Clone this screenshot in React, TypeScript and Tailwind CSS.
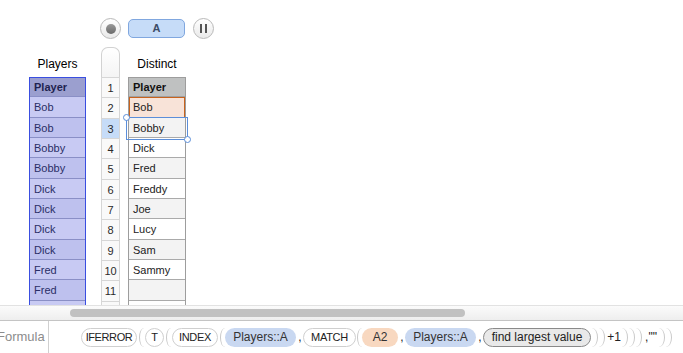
import React from "react";

const players = ["Bob", "Bob", "Bobby", "Bobby", "Dick", "Dick", "Dick", "Dick", "Fred", "Fred", "Fred", "Fred"];
const distinct = ["Bob", "Bobby", "Dick", "Fred", "Freddy", "Joe", "Lucy", "Sam", "Sammy", "", "", ""];

const OpenArc = ({ ml }: { ml: string }) => (
  <span className={`${ml} h-[19px] w-[5px] shrink-0 border-l border-[#c9c9c9] rounded-tl-[100%_50%] rounded-bl-[100%_50%]`} />
);

const CloseArc = ({ ml }: { ml: string }) => (
  <span className={`${ml} h-[19px] w-[6px] shrink-0 border-r border-[#c9c9c9] rounded-tr-[100%_50%] rounded-br-[100%_50%]`} />
);

const App: React.FC = () => {
  return (
    <div className="w-[683px] h-[353px] bg-white overflow-hidden flex flex-col font-['Liberation_Sans',Arial,sans-serif] text-[#222]">
      {/* Controls */}
      <div className="h-[47px] shrink-0 flex items-start pt-[18px] pl-[100px]">
        <div className="w-[21px] h-[21px] rounded-full border border-[#b9b9b9] bg-gradient-to-b from-white to-[#e9e9e9] flex items-center justify-center">
          <div className="w-[10px] h-[10px] rounded-full bg-gradient-to-b from-[#9a9a9a] to-[#6a6a6a]" />
        </div>
        <div className="ml-[7px] mt-[1px] w-[57px] h-[19px] rounded-[5px] border border-[#80a7df] bg-[#c6dcf8] flex items-center justify-center text-[11px] font-bold text-[#3b4b66]">
          A
        </div>
        <div className="ml-[8px] w-[21px] h-[21px] rounded-full border border-[#b9b9b9] bg-gradient-to-b from-white to-[#e9e9e9] flex items-center justify-center gap-[3px]">
          <div className="w-[2px] h-[9px] bg-[#555]" />
          <div className="w-[2px] h-[9px] bg-[#555]" />
        </div>
      </div>

      {/* Sheet */}
      <div className="h-[258px] shrink-0 overflow-hidden flex items-start">
        {/* Players table */}
        <div className="ml-[29px] w-[57px] flex flex-col">
          <div className="h-[30px] flex items-end justify-center pb-[6px] text-[12px] leading-[14px] text-black">Players</div>
          <div className="border-l border-r border-t border-[#3a4ee0]">
            <div className="h-[19.33px] border-b border-[#8a8fc6] bg-[#9b9fcf] pl-[4px] pt-[1px] flex items-center text-[11px] font-bold text-[#1f2350]">
              Player
            </div>
            {players.map((p, i) => (
              <div
                key={i}
                className={`h-[20.33px] border-b border-[#8a8fc6] pl-[4px] pt-[1px] flex items-center text-[11px] text-[#2a2e66] ${
                  i % 2 === 0 ? "bg-[#c8caf3]" : "bg-[#bec1ee]"
                }`}
              >
                {p}
              </div>
            ))}
          </div>
        </div>

        {/* Row numbers */}
        <div className="ml-[15px] w-[19px] flex flex-col">
          <div className="h-[30px] rounded-t-[7px] border border-b-0 border-[#d2d2d2] bg-gradient-to-b from-white to-[#f4f4f4]" />
          {Array.from({ length: 12 }).map((_, i) => (
            <div
              key={i}
              className={`h-[20.33px] border-l border-r border-t border-[#d6d6d6] pt-[1px] flex items-center justify-center text-[11px] text-[#2a2a2a] ${
                i === 2 ? "bg-[#c6dcf8]" : "bg-[#f9f9f9]"
              }`}
            >
              {i + 1}
            </div>
          ))}
        </div>

        {/* Distinct table */}
        <div className="relative ml-[8px] w-[58px] flex flex-col">
          <div className="h-[30px] flex items-end justify-center pb-[6px] text-[12px] leading-[14px] text-black">Distinct</div>
          <div className="border-l border-r border-t border-[#9d9d9d]">
            <div className="h-[19.33px] border-b border-[#a0a0a0] bg-[#bfc1c1] pl-[4px] pt-[1px] flex items-center text-[11px] font-bold text-[#111]">
              Player
            </div>
            {distinct.map((d, i) => (
              <div
                key={i}
                className={`h-[20.33px] border-b pl-[4px] pt-[1px] flex items-center text-[11px] text-[#222] ${
                  i === 0
                    ? "bg-[#f8e3d8] border-[#c8631d] outline outline-1 outline-[#c8631d] -outline-offset-1"
                    : i % 2 === 1
                    ? "bg-[#f3f3f3] border-[#aaaaaa]"
                    : "bg-white border-[#aaaaaa]"
                }`}
              >
                {d}
              </div>
            ))}
          </div>

          {/* Selection overlay */}
          <div className="absolute left-[-2px] top-[70px] w-[62px] h-[23px] border border-[#5b8ed9]">
            <div className="absolute -left-[4px] -top-[4px] w-[7px] h-[7px] rounded-full border border-[#5b8ed9] bg-white" />
            <div className="absolute -right-[4px] -bottom-[4px] w-[7px] h-[7px] rounded-full border border-[#5b8ed9] bg-white" />
          </div>
        </div>
      </div>

      {/* Scrollbar */}
      <div className="h-[16px] shrink-0 border-t border-[#e2e2e2] border-b border-b-[#c4c4c4] bg-gradient-to-b from-[#fbfbfb] to-[#eeeeee] flex items-center pl-[70px]">
        <div className="w-[395px] h-[8px] rounded-full bg-[#c1c1c1]" />
      </div>

      {/* Formula bar */}
      <div className="flex-1 flex items-center">
        <div className="w-[49px] h-full shrink-0 border-r border-[#d0d0d0] flex items-center overflow-hidden">
          <span className="-ml-[3px] text-[13px] text-[#8c8c8c]">Formula</span>
        </div>
        <div className="flex items-center pl-[32px] text-[12px] text-[#222] whitespace-nowrap">
          <span className="w-[56px] h-[19px] shrink-0 rounded-full border border-[#cfcfcf] bg-white flex items-center justify-center text-[11px] tracking-[-0.4px]">IFERROR</span>
          <OpenArc ml="ml-[2px]" />
          <span className="ml-[1px] w-[19px] h-[19px] shrink-0 rounded-full border border-[#cfcfcf] bg-white flex items-center justify-center text-[11px]">T</span>
          <OpenArc ml="ml-[2px]" />
          <span className="ml-[1px] w-[46px] h-[19px] shrink-0 rounded-full border border-[#cfcfcf] bg-white flex items-center justify-center text-[11px] tracking-[-0.3px]">INDEX</span>
          <OpenArc ml="ml-[2px]" />
          <span className="w-[71px] h-[19px] shrink-0 rounded-full bg-[#c9d8f1] flex items-center justify-center text-[#333]">Players::A</span>
          <span className="ml-[2px] w-[4px] shrink-0 text-center">,</span>
          <span className="ml-[1px] w-[53px] h-[19px] shrink-0 rounded-full border border-[#cfcfcf] bg-white flex items-center justify-center text-[11px] tracking-[-0.3px]">MATCH</span>
          <OpenArc ml="ml-[1px]" />
          <span className="w-[36px] h-[19px] shrink-0 rounded-full bg-[#f8d8c0] flex items-center justify-center text-[#333]">A2</span>
          <span className="ml-[2px] w-[4px] shrink-0 text-center">,</span>
          <span className="ml-[1px] w-[71px] h-[19px] shrink-0 rounded-full bg-[#c9d8f1] flex items-center justify-center text-[#333]">Players::A</span>
          <span className="ml-[2px] w-[4px] shrink-0 text-center">,</span>
          <span className="ml-[1px] w-[108px] h-[19px] shrink-0 rounded-full border border-[#8a8a8a] bg-[#e9e9e9] flex items-center justify-center">find largest value</span>
          <CloseArc ml="ml-[1px]" />
          <CloseArc ml="ml-[1px]" />
          <span className="ml-[2px] w-[14px] shrink-0 text-center">+1</span>
          <CloseArc ml="ml-[1px]" />
          <CloseArc ml="ml-[1px]" />
          <CloseArc ml="ml-[1px]" />
          <span className="ml-[2px] w-[14px] shrink-0 text-center">,""</span>
          <CloseArc ml="ml-[1px]" />
          <CloseArc ml="ml-[1px]" />
        </div>
      </div>
    </div>
  );
};

export default App;
